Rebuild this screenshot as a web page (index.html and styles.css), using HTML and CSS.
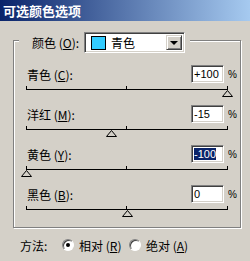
FILE: index.html
```html
<!DOCTYPE html>
<html lang="zh-CN">
<head>
    <meta charset="UTF-8">
    <meta name="viewport" content="width=device-width, initial-scale=1.0">
    <title>可选颜色选项</title>
    <link rel="stylesheet" href="styles.css">
</head>
<body>
    <div class="titlebar">可选颜色选项</div>

    <div class="dialog">
        <div class="group">
            <div class="group-head">
                <span class="head-label">颜色 (<u>O</u>):</span>
                <div class="combo">
                    <span class="swatch"></span>
                    <span class="combo-text">青色</span>
                    <span class="combo-btn"><span class="arrow"></span></span>
                </div>
            </div>

            <div class="rows">
                <div class="row">
                    <div class="row-head">
                        <span class="row-label">青色 (<u>C</u>):</span>
                        <span class="field">+100</span>
                        <span class="pct">%</span>
                    </div>
                    <div class="slider">
                        <span class="tick"></span>
                        <div class="track">
                            <span class="thumb" style="left: 100%"><svg width="11" height="7" viewBox="0 0 11 7"><polygon points="5.5,0.5 10.5,6.5 0.5,6.5" fill="#d4d0c8" stroke="#000"/></svg></span>
                        </div>
                    </div>
                </div>

                <div class="row">
                    <div class="row-head">
                        <span class="row-label">洋红 (<u>M</u>):</span>
                        <span class="field">-15</span>
                        <span class="pct">%</span>
                    </div>
                    <div class="slider">
                        <span class="tick"></span>
                        <div class="track">
                            <span class="thumb" style="left: 42.5%"><svg width="11" height="7" viewBox="0 0 11 7"><polygon points="5.5,0.5 10.5,6.5 0.5,6.5" fill="#d4d0c8" stroke="#000"/></svg></span>
                        </div>
                    </div>
                </div>

                <div class="row">
                    <div class="row-head">
                        <span class="row-label">黄色 (<u>Y</u>):</span>
                        <span class="field"><span class="selected">-100</span></span>
                        <span class="pct">%</span>
                    </div>
                    <div class="slider">
                        <span class="tick"></span>
                        <div class="track">
                            <span class="thumb" style="left: 0%"><svg width="11" height="7" viewBox="0 0 11 7"><polygon points="5.5,0.5 10.5,6.5 0.5,6.5" fill="#d4d0c8" stroke="#000"/></svg></span>
                        </div>
                    </div>
                </div>

                <div class="row">
                    <div class="row-head">
                        <span class="row-label">黑色 (<u>B</u>):</span>
                        <span class="field">0</span>
                        <span class="pct">%</span>
                    </div>
                    <div class="slider">
                        <span class="tick"></span>
                        <div class="track">
                            <span class="thumb" style="left: 50%"><svg width="11" height="7" viewBox="0 0 11 7"><polygon points="5.5,0.5 10.5,6.5 0.5,6.5" fill="#d4d0c8" stroke="#000"/></svg></span>
                        </div>
                    </div>
                </div>
            </div>
        </div>

        <div class="method">
            <span class="method-label">方法:</span>
            <label class="option">
                <span class="radio checked"></span>
                <span>相对 (<u>R</u>)</span>
            </label>
            <label class="option">
                <span class="radio"></span>
                <span>绝对 (<u>A</u>)</span>
            </label>
        </div>
    </div>
</body>
</html>
```

FILE: styles.css
```css
/* Dialog dasar gaya Windows klasik */
body {
    margin: 0;
    width: 250px;
    height: 261px;
    overflow: hidden;
    background: #d4d0c8;
    color: #000;
    font-family: "Noto Sans CJK SC", "Liberation Sans", sans-serif;
    font-size: 12px;
}

u {
    text-decoration: underline;
}

/* Title bar dengan gradien biru */
.titlebar {
    height: 21px;
    line-height: 21px;
    padding-left: 3px;
    background: linear-gradient(90deg, #0a246a, #a6caf0);
    color: #fff;
    font-size: 13px;
    font-weight: bold;
}

/* Group box dengan garis etched */
.group {
    width: 228px;
    margin: 19px 0 0 13px;
    padding: 0 0 2px 12px;
    border: 1px solid #808080;
    box-shadow: inset 1px 1px 0 #fff, 1px 1px 0 #fff;
    box-sizing: border-box;
}

.group-head {
    display: flex;
    align-items: center;
    width: 171px;
    height: 21px;
    margin: -9px 0 0 -7px;
    padding-left: 13px;
    box-sizing: border-box;
    background: #d4d0c8;
}

.head-label {
    width: 52px;
    flex-shrink: 0;
}

/* Combo box warna */
.combo {
    display: flex;
    align-items: center;
    width: 101px;
    height: 21px;
    box-sizing: border-box;
    background: #fff;
    border: 1px solid;
    border-color: #808080 #fff #fff #808080;
    box-shadow: inset 1px 1px 0 #404040, inset -1px -1px 0 #d4d0c8;
    padding: 0 2px 0 6px;
}

.swatch {
    width: 15px;
    height: 14px;
    box-sizing: border-box;
    background: #33ccff;
    border: 1px solid #000;
}

.combo-text {
    flex: 1;
    padding-left: 5px;
}

.combo-btn {
    display: flex;
    align-items: center;
    justify-content: center;
    width: 16px;
    height: 15px;
    box-sizing: border-box;
    background: #d4d0c8;
    border: 1px solid;
    border-color: #d4d0c8 #404040 #404040 #d4d0c8;
    box-shadow: inset 1px 1px 0 #fff, inset -1px -1px 0 #808080;
}

.arrow {
    width: 0;
    height: 0;
    border-left: 4px solid transparent;
    border-right: 4px solid transparent;
    border-top: 4px solid #000;
    margin-top: 1px;
}

/* Baris slider */
.rows {
    margin-top: 12px;
}

.row {
    height: 40px;
}

.row-head {
    display: flex;
    align-items: center;
    height: 18px;
}

.row-label {
    width: 164px;
    padding-left: 1px;
}

.field {
    width: 33px;
    height: 18px;
    box-sizing: border-box;
    background: #fff;
    border: 1px solid;
    border-color: #808080 #fff #fff #808080;
    box-shadow: inset 1px 1px 0 #404040, inset -1px -1px 0 #d4d0c8;
    padding-left: 2px;
    font-family: "Liberation Sans", sans-serif;
    font-size: 11px;
    line-height: 16px;
}

.selected {
    background: #0a246a;
    color: #fff;
}

.pct {
    margin-left: 4px;
    font-family: "Liberation Sans", sans-serif;
    font-size: 10px;
}

.slider {
    position: relative;
    width: 202px;
    height: 22px;
}

/* garis track dengan tanda di ujung */
.slider::before {
    content: "";
    position: absolute;
    left: 0;
    top: 3px;
    width: 200px;
    height: 3px;
    border: 1px solid #000;
    border-top: 0;
}

.tick {
    position: absolute;
    left: 100px;
    top: 3px;
    width: 1px;
    height: 3px;
    background: #000;
}

.track {
    position: absolute;
    left: 0;
    top: 7px;
    width: 201px;
}

.thumb {
    position: absolute;
    top: 0;
    margin-left: -5px;
    line-height: 0;
}

/* Pilihan metode */
.method {
    display: flex;
    align-items: center;
    height: 14px;
    margin-top: 10px;
    padding-left: 20px;
}

.method-label {
    width: 42px;
}

.option {
    display: flex;
    align-items: center;
    gap: 5px;
    width: 67px;
}

.radio {
    position: relative;
    width: 12px;
    height: 12px;
    box-sizing: border-box;
    border-radius: 50%;
    background: #fff;
    border: 1px solid;
    border-color: #808080 #fff #fff #808080;
    box-shadow: inset 1px 1px 0 #404040;
}

.radio.checked::after {
    content: "";
    position: absolute;
    left: 3px;
    top: 3px;
    width: 4px;
    height: 4px;
    border-radius: 50%;
    background: #000;
}
```
